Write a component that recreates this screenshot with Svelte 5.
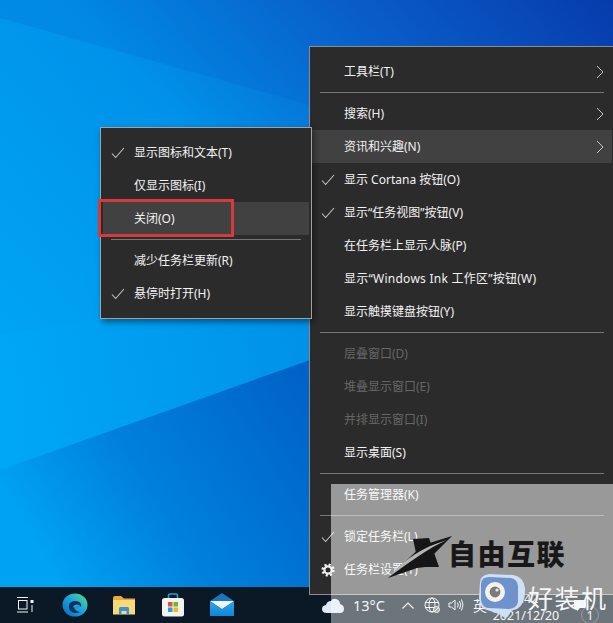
<script>
  const mainMenu = [
    { label: "工具栏(T)", arrow: true },
    { sep: true },
    { label: "搜索(H)", arrow: true },
    { label: "资讯和兴趣(N)", arrow: true, active: true },
    { label: "显示 Cortana 按钮(O)", check: true },
    { label: "显示“任务视图”按钮(V)", check: true },
    { label: "在任务栏上显示人脉(P)" },
    { label: "显示“Windows Ink 工作区”按钮(W)", wide: true },
    { label: "显示触摸键盘按钮(Y)" },
    { sep: true },
    { label: "层叠窗口(D)", disabled: true },
    { label: "堆叠显示窗口(E)", disabled: true },
    { label: "并排显示窗口(I)", disabled: true },
    { label: "显示桌面(S)" },
    { sep: true },
    { label: "任务管理器(K)" },
    { sep: true },
    { label: "锁定任务栏(L)", check: true },
    { label: "任务栏设置(T)", gear: true },
  ];

  const newsMenu = [
    { label: "显示图标和文本(T)", check: true },
    { label: "仅显示图标(I)" },
    { label: "关闭(O)", active: true },
    { sep: true },
    { label: "减少任务栏更新(R)" },
    { label: "悬停时打开(H)", check: true },
  ];
</script>

{#snippet rows(items)}
  {#each items as item}
    {#if item.sep}
      <div class="sep"></div>
    {:else}
      <div class="row" class:active={item.active} class:disabled={item.disabled}>
        <span class="mark">
          {#if item.check}
            <svg width="14" height="12" viewBox="0 0 14 12"><path d="M1 6.5 L4.6 10.5 L13 1" fill="none" stroke="#c4c4c4" stroke-width="1.1" /></svg>
          {:else if item.gear}
            <svg width="14" height="14" viewBox="0 0 14 14">
              <circle cx="7" cy="7" r="5.4" fill="none" stroke="#f2f2f2" stroke-width="2.4" stroke-dasharray="2.1 2.14" />
              <circle cx="7" cy="7" r="3.6" fill="none" stroke="#f2f2f2" stroke-width="2.2" />
            </svg>
          {/if}
        </span>
        <span class="label" class:wide={item.wide}>{item.label}</span>
        {#if item.arrow}
          <svg class="chev" width="8" height="14" viewBox="0 0 8 14"><path d="M1 1 L7 7 L1 13" fill="none" stroke="#c8c8c8" stroke-width="1" /></svg>
        {/if}
      </div>
    {/if}
  {/each}
{/snippet}

<div class="desktop">
  <div class="wallpaper">
    <svg class="beams" width="613" height="587" viewBox="0 0 613 587">
      <defs>
        <linearGradient id="wall" x1="1" y1="0" x2="0.1" y2="0.75">
          <stop offset="0" stop-color="#0838a8" />
          <stop offset="0.3" stop-color="#0a62cc" />
          <stop offset="0.58" stop-color="#0092ea" />
          <stop offset="1" stop-color="#00a6f5" />
        </linearGradient>
        <linearGradient id="floor" x1="1" y1="0.1" x2="0" y2="0.55">
          <stop offset="0" stop-color="#0062c6" />
          <stop offset="0.6" stop-color="#0080dc" />
          <stop offset="1" stop-color="#00a2f2" />
        </linearGradient>
        <linearGradient id="band" x1="0" y1="0" x2="1" y2="0">
          <stop offset="0" stop-color="#00a8f6" />
          <stop offset="1" stop-color="#0090e8" />
        </linearGradient>
      </defs>
      <rect width="613" height="587" fill="url(#wall)" />
      <polygon points="0,0 613,0 613,190 310,105 0,18" fill="#0a4fc0" opacity="0.15" />
      <polygon points="0,335 310,285 310,360 0,470" fill="url(#band)" opacity="0.7" />
      <polygon points="0,470 310,360 310,587 0,587" fill="url(#floor)" />
    </svg>
  </div>

  <div class="taskbar">
    <div class="cell first">
      <svg width="18" height="16" viewBox="0 0 18 16" fill="none" stroke="#f4f4f4" stroke-width="1">
        <path d="M1 .5 H12 M1 15 H12" />
        <rect x="2.5" y="3.5" width="8.5" height="8.5" />
        <path d="M16 8 V15" />
        <rect x="14.5" y="3" width="3" height="3" fill="#f4f4f4" stroke="none" />
      </svg>
    </div>
    <div class="cell">
      <svg width="26" height="24" viewBox="0 0 26 24">
        <defs>
          <linearGradient id="edge" x1="0" y1="1" x2="1" y2="0">
            <stop offset="0" stop-color="#0b66c0" />
            <stop offset="0.5" stop-color="#1aa0e0" />
            <stop offset="1" stop-color="#5ade88" />
          </linearGradient>
        </defs>
        <ellipse cx="13" cy="12" rx="12.5" ry="11.5" fill="url(#edge)" />
        <path d="M7 15 C6 10 10 7.5 14 8 C18 8.5 20 11 19 14 C17 13.5 15 13.5 12.5 14 C12 16.5 14 18.5 18 19 C14 21 8 20 7 15 Z" fill="#0c3560" />
        <path d="M11 14.5 C11.5 11 17 10.5 19 14 C16 13.4 14 13.6 11 14.5 Z" fill="#2a9fd8" />
      </svg>
    </div>
    <div class="cell">
      <svg width="24" height="20" viewBox="0 0 24 20">
        <path d="M1 3 Q1 1 3 1 H9 L12 3.5 H23 V6 H1 Z" fill="#e9a93c" />
        <rect x="1" y="5" width="22" height="14.5" fill="#f7d977" />
        <path d="M7 19.5 V13.5 Q7 12 8.5 12 H15.5 Q17 12 17 13.5 V19.5 H14.5 V16 H9.5 V19.5 Z" fill="#3c8fd8" />
      </svg>
    </div>
    <div class="cell">
      <svg width="24" height="24" viewBox="0 0 24 24">
        <path d="M7.5 6 V2.5 Q7.5 1 9 1 H15 Q16.5 1 16.5 2.5 V6" fill="none" stroke="#1fa3d8" stroke-width="1.6" />
        <rect x="1" y="5" width="22" height="18.5" rx="2.5" fill="#f2f2f2" />
        <rect x="7" y="9" width="4.5" height="4.5" fill="#e8502a" />
        <rect x="12.5" y="9" width="4.5" height="4.5" fill="#6cb52d" />
        <rect x="7" y="14.5" width="4.5" height="4.5" fill="#1f9fe8" />
        <rect x="12.5" y="14.5" width="4.5" height="4.5" fill="#f6b81c" />
      </svg>
    </div>
    <div class="cell">
      <svg width="24" height="24" viewBox="0 0 24 24">
        <defs>
          <linearGradient id="mail" x1="0" y1="0" x2="0" y2="1">
            <stop offset="0" stop-color="#2aa8ea" />
            <stop offset="1" stop-color="#0f86d6" />
          </linearGradient>
        </defs>
        <path d="M0 8 L12 0 L24 8 V23 H0 Z" fill="#1a74be" />
        <path d="M0 8 H24 L12 16 Z" fill="#eef6fc" />
        <path d="M0 8.5 L12 16.5 L24 8.5 V23 H0 Z" fill="url(#mail)" />
      </svg>
    </div>

    <div class="tray">
      <svg class="cloud" width="22" height="15" viewBox="0 0 22 15">
        <path d="M5 15 Q0 15 0 11 Q0 7.5 4 7 Q5 3 9 3 Q10.5 0 14 1 Q18 2 18 6 Q22 7 22 11 Q22 15 18 15 Z" fill="#dfeaf6" />
      </svg>
      <span class="temp">13°C</span>
      <svg class="up" width="12" height="7" viewBox="0 0 12 7"><path d="M.5 6.5 L6 1 L11.5 6.5" fill="none" stroke="#f2f2f2" stroke-width="1.1" /></svg>
      <svg class="globe" width="16" height="16" viewBox="0 0 16 16" fill="none" stroke="#f2f2f2" stroke-width="1">
        <circle cx="8" cy="8" r="7" />
        <ellipse cx="8" cy="8" rx="3" ry="7" />
        <path d="M1 5.5 H15 M1 10.5 H15" />
        <circle cx="12.5" cy="12.5" r="3" fill="#6e7378" />
        <path d="M10.5 14.5 L14.5 10.5" />
      </svg>
      <svg class="speaker" width="16" height="14" viewBox="0 0 16 14" fill="none" stroke="#f2f2f2" stroke-width="1">
        <path d="M1 5 H3.5 L7 2 V12 L3.5 9 H1 Z" />
        <path d="M9.5 4.5 Q11 7 9.5 9.5 M11.5 3 Q14 7 11.5 11 M13.5 1.5 Q16.5 7 13.5 12.5" />
      </svg>
      <span class="ime">英</span>
      <div class="clock">
        <span>9:42</span>
        <span>2021/12/20</span>
      </div>
      <svg class="note" width="12" height="11" viewBox="0 0 12 11"><path d="M0 0 H12 V8 H6 L3 11 V8 H0 Z" fill="#f4f4f4" /></svg>
    </div>
  </div>

  <div class="menu main">
    {@render rows(mainMenu)}
  </div>

  <div class="menu news">
    {@render rows(newsMenu)}
    <div class="redbox"></div>
  </div>

  <div class="veil">
    <div class="veil-menu"></div>
    <div class="veil-bar"></div>
  </div>

  <div class="badge">1</div>

  <svg class="x-logo" width="66" height="44" viewBox="0 0 66 44">
    <polygon points="26,4 42,3 52,32 32,32" fill="#161616" />
    <polygon points="65,1 36,10 8,36 1,43 30,33 38,32 46,20" fill="#161616" />
    <path d="M2 42 C16 25 36 12 60 5 C40 14 24 26 2 42 Z" fill="#b4b4b4" />
  </svg>
  <div class="brand">自由互联</div>

  <svg class="mascot" width="50" height="46" viewBox="0 0 50 46">
    <path d="M3 8 Q4 1 12 0 L36 1 Q46 2 48 14 Q49 30 40 35 L34 37 Q32 43 28 44 L22 40 L10 36 Q3 35 2 24 Z" fill="#cfe0f4" />
    <path d="M4 9 Q5 3 12 3 L34 4 Q40 5 41 12 L41 28 Q40 34 32 35 L11 34 Q5 33 4 26 Z" fill="#6d92cc" />
    <circle cx="18" cy="18" r="10" fill="#f4f2ee" />
    <circle cx="18" cy="18" r="5.4" fill="#7c7a76" />
    <circle cx="20" cy="16" r="1.6" fill="#e8e8e8" />
  </svg>
  <div class="brand-2">好装机</div>
</div>

<style>
  :global(body) {
    margin: 0;
  }

  .desktop {
    position: relative;
    width: 613px;
    height: 623px;
    overflow: hidden;
    display: flex;
    flex-direction: column;
    font-family: "Noto Sans", "Noto Sans CJK SC", sans-serif;
  }

  .wallpaper {
    flex: 1;
    position: relative;
  }

  .beams {
    display: block;
  }

  .taskbar {
    height: 36px;
    flex-shrink: 0;
    background: #0b1826;
    display: flex;
    align-items: center;
  }

  .cell {
    width: 49px;
    height: 36px;
    display: flex;
    align-items: center;
    justify-content: center;
  }

  .cell.first {
    margin-right: 1px;
  }

  .tray {
    margin-left: 76px;
    display: flex;
    align-items: center;
    color: #f2f2f2;
  }

  .temp {
    margin-left: 9px;
    font-size: 14.5px;
  }

  .up {
    margin-left: 17px;
  }

  .globe {
    margin-left: 10px;
  }

  .speaker {
    margin-left: 8px;
  }

  .ime {
    margin-left: 9px;
    font-size: 14px;
  }

  .clock {
    margin-left: 1px;
    width: 76px;
    display: flex;
    flex-direction: column;
    align-items: center;
    font-size: 12.5px;
    line-height: 17px;
    padding-top: 3px;
  }

  .note {
    margin-left: 10px;
  }

  .menu {
    position: absolute;
    box-sizing: border-box;
    background: #2b2b2b;
    border: 1px solid #8c8c8c;
    padding: 8px 2px;
    color: #f2f2f2;
    font-size: 12px;
  }

  .main {
    left: 309px;
    top: 46px;
    width: 306px;
  }

  .news {
    left: 100px;
    top: 127px;
    width: 212px;
    border-color: #a2a2a2;
    box-shadow: 2px 3px 6px rgba(0, 0, 0, 0.45);
  }

  .row {
    height: 33px;
    display: flex;
    align-items: center;
  }

  .row.active {
    background: #414141;
  }

  .row.disabled {
    color: #676767;
  }

  .mark {
    width: 31px;
    padding-left: 8px;
    box-sizing: border-box;
    display: flex;
    align-items: center;
    flex-shrink: 0;
  }

  .main .mark {
    width: 32px;
    padding-left: 9px;
  }

  .label {
    flex: 1;
    white-space: nowrap;
    padding-bottom: 2px;
  }

  .label.wide {
    letter-spacing: 0.25px;
  }

  .chev {
    margin-right: 8px;
  }

  .sep {
    height: 1px;
    margin: 4px 8px;
    background: #767676;
  }

  .redbox {
    position: absolute;
    left: -3px;
    top: 71px;
    width: 130px;
    height: 32px;
    border: 3px solid #d8393a;
  }

  .veil {
    position: absolute;
    left: 331px;
    top: 484px;
    right: 0;
    bottom: 0;
    display: flex;
    flex-direction: column;
  }

  .veil-menu {
    height: 111px;
    background: rgba(255, 255, 255, 0.52);
  }

  .veil-bar {
    flex: 1;
    background: rgba(255, 255, 255, 0.4);
  }

  .badge {
    position: absolute;
    left: 581px;
    top: 606px;
    width: 16px;
    height: 16px;
    border: 1px solid #9c9c9c;
    border-radius: 50%;
    color: #f4f4f4;
    font-size: 13px;
    line-height: 16px;
    text-align: center;
  }

  .x-logo {
    position: absolute;
    left: 387px;
    top: 535px;
  }

  .brand {
    position: absolute;
    left: 448px;
    top: 534px;
    font-family: "Noto Sans CJK SC", sans-serif;
    font-weight: 900;
    font-size: 28px;
    line-height: 38px;
    letter-spacing: 1.5px;
    color: #181818;
    white-space: nowrap;
  }

  .mascot {
    position: absolute;
    left: 477px;
    top: 574px;
  }

  .brand-2 {
    position: absolute;
    left: 528px;
    top: 580px;
    font-family: "Noto Sans CJK SC", sans-serif;
    font-size: 25px;
    line-height: 34px;
    letter-spacing: 1.5px;
    color: #f6f6f6;
    white-space: nowrap;
  }
</style>
